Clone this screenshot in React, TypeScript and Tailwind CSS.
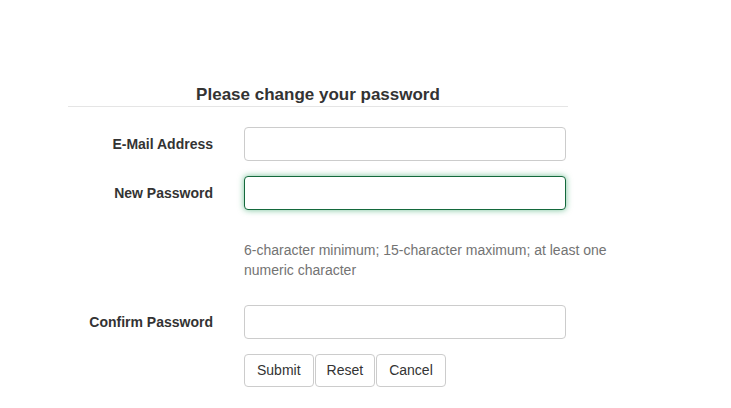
import React from "react";

const font = { fontFamily: '"Liberation Sans", Arial, Helvetica, sans-serif' };

function Row({ label, children }: { label: string; children: React.ReactNode }) {
  return (
    <div className="flex items-center">
      <label className="w-[160px] pr-[15px] text-right text-[14px] font-bold text-[#333]">{label}</label>
      <div className="pl-[16px]">{children}</div>
    </div>
  );
}

export default function App() {
  return (
    <div className="min-h-[408px] w-[731px] bg-white" style={font}>
      <div className="ml-[68px] w-[500px] pt-[85px]">
        <h3 className="border-b border-[#e5e5e5] pb-[1px] text-center text-[17px] font-bold leading-[20px] text-[#333]">
          Please change your password
        </h3>
        <div className="mt-[20px]">
          <Row label="E-Mail Address">
            <input
              type="email"
              className="block h-[34px] w-[322px] rounded-[4px] border border-[#ccc] bg-white px-3 text-[14px] outline-none"
            />
          </Row>
        </div>
        <div className="mt-[15px]">
          <Row label="New Password">
            <input
              type="password"
              className="block h-[34px] w-[322px] rounded-[4px] border border-[#14693c] bg-white px-3 text-[14px] shadow-[0_0_6px_rgba(20,150,80,0.6)] outline-none"
            />
          </Row>
        </div>
        <div className="mt-[30px] whitespace-nowrap pl-[176px] text-[14px] leading-[20px] text-[#737373]">
          6-character minimum; 15-character maximum; at least one
          <br />
          numeric character
        </div>
        <div className="mt-[25px]">
          <Row label="Confirm Password">
            <input
              type="password"
              className="block h-[34px] w-[322px] rounded-[4px] border border-[#ccc] bg-white px-3 text-[14px] outline-none"
            />
          </Row>
        </div>
        <div className="mt-[15px] flex gap-[1px] pl-[176px]">
          <button className="h-[33px] rounded-[4px] border border-[#ccc] bg-white px-[12px] text-[14px] text-[#333]">
            Submit
          </button>
          <button className="h-[33px] rounded-[4px] border border-[#ccc] bg-white px-[11px] text-[14px] text-[#333]">
            Reset
          </button>
          <button className="h-[33px] rounded-[4px] border border-[#ccc] bg-white px-[12px] text-[14px] text-[#333]">
            Cancel
          </button>
        </div>
      </div>
    </div>
  );
}
